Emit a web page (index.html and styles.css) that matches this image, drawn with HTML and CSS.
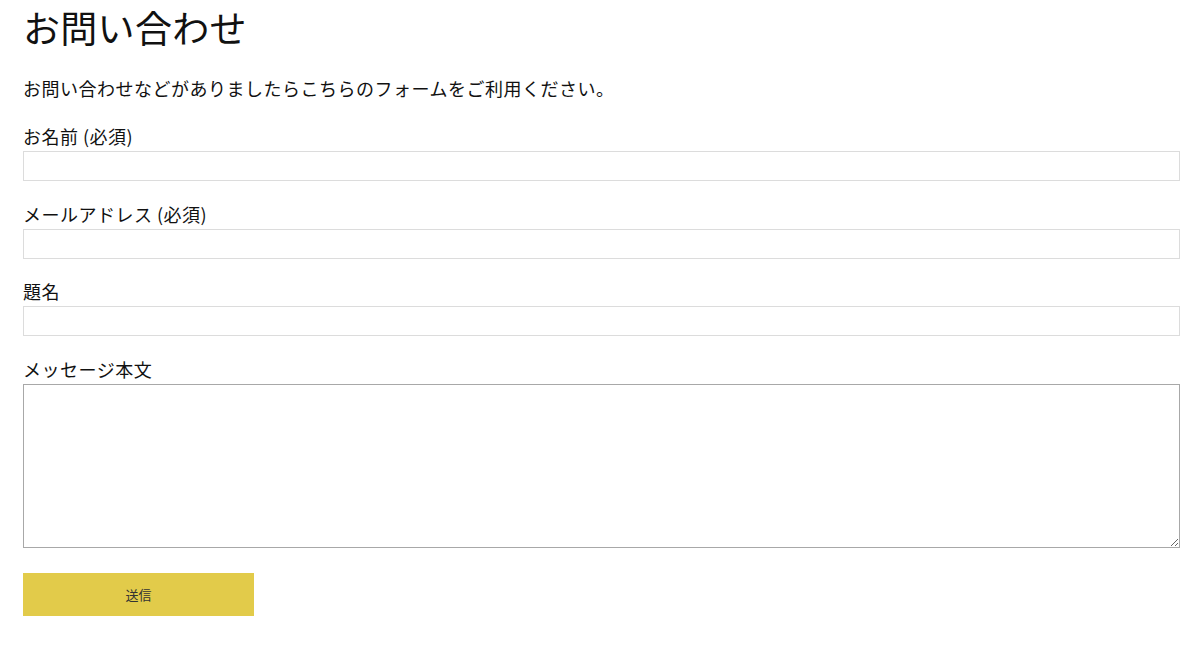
FILE: index.html
```html
<!DOCTYPE html>
<html lang="ja">
<head>
<meta charset="utf-8">
<title>お問い合わせ</title>
<link rel="stylesheet" href="styles.css">
</head>
<body>
<main class="page">
  <h1 class="title">お問い合わせ</h1>
  <p class="lead">お問い合わせなどがありましたらこちらのフォームをご利用ください。</p>
  <form class="form">
    <div class="field">
      <label class="label">お名前 (必須)</label>
      <input class="input" type="text">
    </div>
    <div class="field">
      <label class="label">メールアドレス (必須)</label>
      <input class="input" type="text">
    </div>
    <div class="field">
      <label class="label">題名</label>
      <input class="input" type="text">
    </div>
    <div class="field">
      <label class="label">メッセージ本文</label>
      <textarea class="textarea"></textarea>
    </div>
    <div class="actions">
      <button class="submit" type="button">送信</button>
    </div>
  </form>
</main>
</body>
</html>
```
FILE: styles.css
```css
html, body {
  margin: 0;
  padding: 0;
  background: #fff;
}
body {
  font-family: "Noto Sans CJK JP", "Noto Sans", sans-serif;
  color: #111;
}
.page {
  padding: 5px 20px 0 23px;
}
.title {
  margin: 0;
  font-size: 37px;
  line-height: 44px;
  font-weight: 400;
  letter-spacing: 0.3px;
}
.lead {
  margin: 26px 0 0;
  font-size: 18px;
  line-height: 27px;
  letter-spacing: 0.5px;
}
.form {
  display: flex;
  flex-direction: column;
  gap: 20.5px;
  margin-top: 22px;
}
.field {
  display: flex;
  flex-direction: column;
  gap: 2px;
}
.label {
  font-size: 18px;
  line-height: 25px;
  letter-spacing: 0.5px;
}
.input {
  box-sizing: border-box;
  width: 100%;
  height: 30px;
  margin: 0;
  border: 1px solid #dcdcdc;
  border-radius: 0;
  background: #fff;
  padding: 4px 8px;
  font: inherit;
}
.textarea {
  box-sizing: border-box;
  width: 100%;
  height: 164px;
  margin: 0;
  border: 1px solid #a8a8a8;
  border-radius: 0;
  padding: 4px 8px;
  font: inherit;
  resize: both;
  display: block;
}
.actions {
  margin-top: 5px;
}
.submit {
  width: 231px;
  height: 43px;
  border: 0;
  border-radius: 0;
  background: #e2cb4a;
  color: #333;
  font-family: "Noto Sans CJK JP", sans-serif;
  font-size: 13px;
  padding: 0;
}
```
